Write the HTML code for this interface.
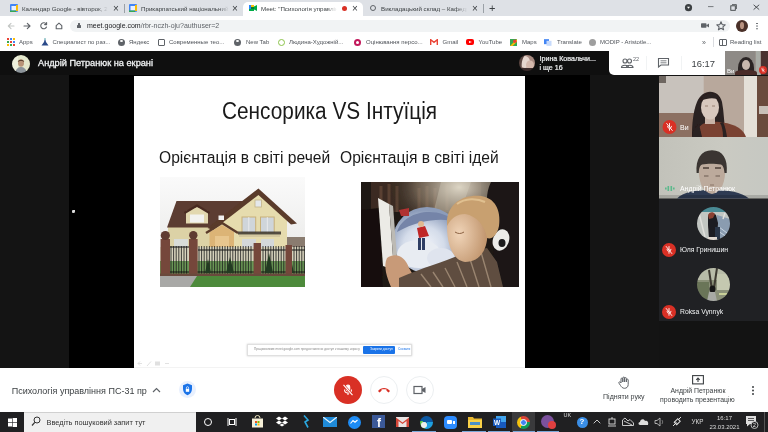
<!DOCTYPE html>
<html><head><meta charset="utf-8">
<style>
*{margin:0;padding:0;box-sizing:border-box}
html,body{width:768px;height:432px;overflow:hidden;background:#fff;font-family:"Liberation Sans",sans-serif}
body{will-change:transform}
.a{position:absolute}
.t{position:absolute;white-space:nowrap;line-height:1}
</style></head><body>
<!-- TAB STRIP -->
<div class="a" style="left:0;top:0;width:768px;height:16px;background:#dee1e6"></div>
<div class="a" style="left:243px;top:2px;width:120px;height:14px;background:#fff;border-radius:5px 5px 0 0"></div>
<div class="a" style="left:124px;top:4px;width:1px;height:9px;background:#9aa0a6"></div>
<div class="a" style="left:483px;top:4px;width:1px;height:9px;background:#9aa0a6"></div>
<!-- tab1 calendar favicon -->
<svg class="a" style="left:10px;top:4px" width="8" height="8" viewBox="0 0 8 8"><rect width="8" height="8" rx="1" fill="#4285f4"/><rect x="1.5" y="2" width="4.5" height="4.5" fill="#e8f0fe"/><rect x="6" y="1" width="2" height="6" fill="#fbbc04"/><rect x="0" y="6.5" width="6" height="1.5" fill="#34a853"/></svg>
<div class="t" style="left:22px;top:6px;font-size:6.2px;color:#3c4043;width:86px;overflow:hidden">Календар Google - вівторок, 23.03</div>
<div class="t" style="left:113px;top:4px;font-size:10px;color:#3c4043">×</div>
<!-- tab2 -->
<svg class="a" style="left:129px;top:4px" width="8" height="8" viewBox="0 0 8 8"><rect width="8" height="8" rx="1" fill="#4285f4"/><rect x="1.5" y="2" width="4.5" height="4.5" fill="#e8f0fe"/><rect x="6" y="1" width="2" height="6" fill="#fbbc04"/><rect x="0" y="6.5" width="6" height="1.5" fill="#34a853"/></svg>
<div class="t" style="left:141px;top:6px;font-size:6.2px;color:#3c4043;width:88px;overflow:hidden">Прикарпатський національний</div>
<div class="t" style="left:232px;top:4px;font-size:10px;color:#3c4043">×</div>
<!-- tab3 active -->
<svg class="a" style="left:249px;top:5px" width="8" height="6" viewBox="0 0 8 6"><rect x="0" y="0" width="5" height="6" fill="#00832d"/><rect x="0" y="0" width="5" height="2" fill="#fbbc04"/><rect x="0" y="0" width="2" height="6" fill="#2684fc"/><rect x="0" y="4" width="5" height="2" fill="#00ac47"/><path d="M5 1.5 L8 0 L8 6 L5 4.5Z" fill="#00ac47"/></svg>
<div class="t" style="left:261px;top:6px;font-size:6.2px;color:#3c4043;width:76px;overflow:hidden">Meet: "Психологія управлін</div>
<div class="a" style="left:341.5px;top:5.8px;width:5px;height:5px;background:#d93025;border-radius:50%"></div>
<div class="t" style="left:352px;top:4px;font-size:10px;color:#3c4043">×</div>
<!-- tab4 -->
<div class="a" style="left:370px;top:5px;width:6px;height:6px;border:1px solid #5f6368;border-radius:50%"></div>
<div class="t" style="left:381px;top:6px;font-size:6.2px;color:#3c4043;width:86px;overflow:hidden">Викладацький склад – Кафедра</div>
<div class="t" style="left:472px;top:4px;font-size:10px;color:#3c4043">×</div>
<div class="t" style="left:489px;top:2.5px;font-size:11px;color:#3c4043">+</div>
<div class="a" style="left:97px;top:4px;width:11px;height:9px;background:linear-gradient(90deg,rgba(222,225,230,0),#dee1e6)"></div>
<div class="a" style="left:218px;top:4px;width:11px;height:9px;background:linear-gradient(90deg,rgba(222,225,230,0),#dee1e6)"></div>
<div class="a" style="left:326px;top:4px;width:11px;height:9px;background:linear-gradient(90deg,rgba(255,255,255,0),#fff)"></div>
<div class="a" style="left:456px;top:4px;width:11px;height:9px;background:linear-gradient(90deg,rgba(222,225,230,0),#dee1e6)"></div>
<!-- window controls -->
<svg class="a" style="left:684px;top:3px" width="80" height="10" viewBox="0 0 80 10">
<circle cx="4.5" cy="4.7" r="3.6" fill="#3c4043"/><path d="M3 3.8 L6 3.8 L4.5 5.8Z" fill="#fff"/>
<path d="M24 3.6 H29.5" stroke="#6a6e72" stroke-width="0.9"/>
<rect x="46.8" y="2.8" width="4.5" height="4.5" fill="none" stroke="#3c4043" stroke-width="0.9"/>
<path d="M48 1.6 H52.4 V6" fill="none" stroke="#3c4043" stroke-width="0.8"/>
<path d="M69.6 1.8 L75.2 6.6 M75.2 1.8 L69.6 6.6" stroke="#3c4043" stroke-width="0.9"/>
</svg>
<!-- TOOLBAR -->
<div class="a" style="left:0;top:16px;width:768px;height:17px;background:#fff"></div>
<div class="a" style="left:70px;top:19.8px;width:660px;height:12.7px;background:#f1f3f4;border-radius:7px"></div>
<svg class="a" style="left:0;top:17px" width="70" height="17" viewBox="0 0 70 17">
<g fill="none" stroke-width="1.1" stroke-linecap="round" stroke-linejoin="round">
<path d="M8.3 9 H14 M8.3 9 L11 6.3 M8.3 9 L11 11.7" stroke="#c4c7c5"/>
<path d="M24 9 H30 M30 9 L27.3 6.3 M30 9 L27.3 11.7" stroke="#5f6368"/>
<path d="M46.3 7.2 A3 3 0 1 0 46.5 10" stroke="#5f6368"/>
<path d="M46.6 5.6 V7.6 H44.6" stroke="#5f6368"/>
<path d="M56.2 8.6 L59 6.1 L61.8 8.6 V11.7 H56.2Z" stroke="#5f6368"/>
</g></svg>
<div class="a" style="left:76.8px;top:25px;width:4px;height:3.3px;background:#5f6368;border-radius:0.5px"></div>
<div class="a" style="left:77.55px;top:23px;width:2.5px;height:3px;border:0.8px solid #5f6368;border-bottom:none;border-radius:1.5px 1.5px 0 0"></div>
<div class="t" style="left:87px;top:22px;font-size:7px;color:#202124">meet.google.com<span style="color:#5f6368">/rbr-nczh-oju?authuser=2</span></div>
<!-- right toolbar icons -->
<svg class="a" style="left:701px;top:23px" width="8" height="5" viewBox="0 0 8 5"><rect x="0" y="0.3" width="5.5" height="4.4" rx="0.8" fill="#5f6368"/><path d="M5 2.5 L8 0.5 V4.5Z" fill="#5f6368"/></svg>
<svg class="a" style="left:716px;top:21px" width="10" height="10" viewBox="0 0 10 10"><path d="M5 0.8 L6.2 3.6 L9.2 3.8 L6.9 5.8 L7.6 8.8 L5 7.2 L2.4 8.8 L3.1 5.8 L0.8 3.8 L3.8 3.6Z" fill="none" stroke="#5f6368" stroke-width="1.1" stroke-linejoin="round"/></svg>
<div class="a" style="left:735.5px;top:19.5px;width:12px;height:12px;background:#4a3028;border-radius:50%;overflow:hidden"><div class="a" style="left:4px;top:2px;width:4.5px;height:7px;background:#b89280;border-radius:50%"></div></div>
<div class="a" style="left:756.2px;top:22.5px;width:1.6px;height:1.6px;background:#5f6368;border-radius:50%;box-shadow:0 2.6px 0 #5f6368,0 5.2px 0 #5f6368"></div>
<!-- BOOKMARKS -->
<div class="a" style="left:0;top:33px;width:768px;height:18px;background:#fff"></div>
<svg class="a" style="left:7px;top:38px" width="8" height="8" viewBox="0 0 8 8">
<rect x="0" y="0" width="2" height="2" fill="#ea4335"/><rect x="3" y="0" width="2" height="2" fill="#4285f4"/><rect x="6" y="0" width="2" height="2" fill="#fbbc04"/>
<rect x="0" y="3" width="2" height="2" fill="#34a853"/><rect x="3" y="3" width="2" height="2" fill="#ea4335"/><rect x="6" y="3" width="2" height="2" fill="#4285f4"/>
<rect x="0" y="6" width="2" height="2" fill="#fbbc04"/><rect x="3" y="6" width="2" height="2" fill="#34a853"/><rect x="6" y="6" width="2" height="2" fill="#ea4335"/>
</svg>
<div class="t" style="left:19px;top:39px;font-size:6px;color:#50545a">Apps</div>
<svg class="a" style="left:41px;top:38px" width="8" height="8" viewBox="0 0 8 8"><path d="M4 0 L5 4 L7.5 7.5 H0.5 L3 4Z" fill="#2a4a8a"/><circle cx="4" cy="1" r="1" fill="#9cc"/></svg>
<div class="t" style="left:52.5px;top:39px;font-size:6px;color:#50545a">Специалист по раз...</div>
<div class="a" style="left:118px;top:38.5px;width:7px;height:7px;background:#5f6368;border-radius:50%"></div>
<div class="a" style="left:120px;top:40px;width:3px;height:2px;background:#fff;border-radius:50%"></div>
<div class="t" style="left:129px;top:39px;font-size:6px;color:#50545a">Яндекс</div>
<div class="a" style="left:157.5px;top:38.5px;width:7px;height:7px;border:1.2px solid #5f6368;border-radius:1px"></div>
<div class="t" style="left:169px;top:39px;font-size:6px;color:#50545a">Современные тео...</div>
<div class="a" style="left:233.5px;top:38.5px;width:7px;height:7px;background:#5f6368;border-radius:50%"></div>
<div class="a" style="left:235.5px;top:40px;width:3px;height:2px;background:#fff;border-radius:50%"></div>
<div class="t" style="left:246px;top:39px;font-size:6px;color:#50545a">New Tab</div>
<div class="a" style="left:277.5px;top:38.5px;width:7px;height:7px;border:1.2px solid #8bc34a;border-radius:50%"></div>
<div class="t" style="left:289px;top:39px;font-size:6px;color:#50545a">Людина-Художній...</div>
<div class="a" style="left:354px;top:38.5px;width:7px;height:7px;background:#c2185b;border-radius:50%"></div>
<div class="a" style="left:356px;top:40.5px;width:3px;height:3px;background:#fff;border-radius:50%"></div>
<div class="t" style="left:366px;top:39px;font-size:6px;color:#50545a">Оцінювання персо...</div>
<svg class="a" style="left:430px;top:39px" width="8" height="6" viewBox="0 0 8 6"><path d="M0.7 6 V0.7 L4 3.3 L7.3 0.7 V6" fill="none" stroke="#ea4335" stroke-width="1.4"/></svg>
<div class="t" style="left:442.5px;top:39px;font-size:6px;color:#50545a">Gmail</div>
<div class="a" style="left:466px;top:39px;width:8px;height:6px;background:#f00;border-radius:2px"></div>
<div class="a" style="left:469px;top:40.5px;width:0;height:0;border-left:3px solid #fff;border-top:1.5px solid transparent;border-bottom:1.5px solid transparent"></div>
<div class="t" style="left:478.5px;top:39px;font-size:6px;color:#50545a">YouTube</div>
<svg class="a" style="left:510px;top:38.5px" width="7" height="7" viewBox="0 0 8 8"><rect width="8" height="8" fill="#34a853"/><path d="M0 8 L8 0 V3 L3 8Z" fill="#fbbc04"/><circle cx="5.5" cy="2.5" r="2" fill="#ea4335"/></svg>
<div class="t" style="left:522px;top:39px;font-size:6px;color:#50545a">Maps</div>
<svg class="a" style="left:544px;top:38.5px" width="7.5" height="7" viewBox="0 0 9 8"><rect width="6" height="6" fill="#4285f4"/><rect x="3" y="2" width="6" height="6" fill="#c6dafc"/></svg>
<div class="t" style="left:557px;top:39px;font-size:6px;color:#50545a">Translate</div>
<div class="a" style="left:588.5px;top:38.5px;width:7px;height:7px;background:#9e9e9e;border-radius:50%"></div>
<div class="t" style="left:600px;top:39px;font-size:6px;color:#50545a">MODIP - Aristotle...</div>
<div class="t" style="left:702px;top:38.5px;font-size:7px;color:#5f6368">»</div>
<div class="a" style="left:713px;top:37px;width:1px;height:10px;background:#dadce0"></div>
<div class="a" style="left:718.5px;top:38.5px;width:8px;height:7px;border:1px solid #5f6368;border-radius:1px"></div>
<div class="a" style="left:722px;top:39px;width:1px;height:6px;background:#5f6368"></div>
<div class="t" style="left:730px;top:39px;font-size:6px;color:#50545a">Reading list</div>
<!-- MEET AREA -->
<div class="a" style="left:0;top:51px;width:768px;height:317px;background:#141414"></div>
<div class="a" style="left:0;top:51px;width:609px;height:24px;background:#0f0f0f"></div>
<div class="a" style="left:69px;top:75px;width:521px;height:293px;background:#000"></div>
<!-- presenter avatar -->
<svg class="a" style="left:12px;top:54.5px" width="18" height="18" viewBox="0 0 18 18">
<defs><clipPath id="pa"><circle cx="9" cy="9" r="9"/></clipPath></defs>
<g clip-path="url(#pa)" filter="url(#ab)">
<rect width="18" height="18" fill="#e4e8cc"/>
<rect x="0" y="0" width="6" height="18" fill="#eef0dc"/>
<path d="M3 18 C4 13 7 12 9 12 C11 12 14 13 15 18Z" fill="#8c949a"/>
<ellipse cx="9" cy="8" rx="3" ry="3.8" fill="#b89478"/>
<path d="M5.8 7 C6 4 12 4 12.2 7 C11 5.5 7 5.5 5.8 7Z" fill="#5a4030"/>
</g></svg>
<div class="t" style="left:38px;top:59.3px;font-size:9.2px;color:#f1f3f4;-webkit-text-stroke:0.3px #f1f3f4">Андрій Петранюк на екрані</div>
<!-- Iryna -->
<svg class="a" style="left:519px;top:55px" width="16" height="16" viewBox="0 0 16 16">
<defs><clipPath id="ir"><circle cx="8" cy="8" r="8"/></clipPath></defs>
<g clip-path="url(#ir)" filter="url(#ab)">
<rect width="16" height="16" fill="#a88a80"/>
<ellipse cx="6" cy="7" rx="5" ry="6" fill="#e6d6ce"/>
<ellipse cx="11" cy="10" rx="4" ry="4.5" fill="#d4b8ac"/>
<path d="M0 0 H6 C3 4 2 8 3 16 H0Z" fill="#5a4440"/>
<rect x="0" y="13" width="16" height="3" fill="#3a2c2a"/>
</g></svg>
<div class="t" style="left:539.5px;top:56.1px;font-size:7.1px;color:#f1f3f4;-webkit-text-stroke:0.2px #f1f3f4">Ірина Ковальчи...</div>
<div class="t" style="left:539.5px;top:65.1px;font-size:7.1px;color:#f1f3f4;-webkit-text-stroke:0.2px #f1f3f4">і ще 16</div>
<!-- white panel -->
<div class="a" style="left:609px;top:51px;width:116px;height:24px;background:#fff;border-radius:0 0 0 5px"></div>
<div class="a" style="left:646px;top:56px;width:1px;height:14px;background:#f1f3f4"></div>
<div class="a" style="left:681px;top:56px;width:1px;height:14px;background:#f1f3f4"></div>
<svg class="a" style="left:620px;top:57px" width="22" height="12" viewBox="0 0 22 12">
<g fill="none" stroke="#5f6368" stroke-width="1.1">
<circle cx="5" cy="4" r="2"/><circle cx="9.5" cy="4" r="2"/>
<path d="M1.5 10.5 C1.5 7.5 8.5 7.5 8.5 10.5Z"/><path d="M6.5 10.5 C6.5 7.5 13 7.5 13 10.5Z"/>
</g></svg>
<div class="t" style="left:633px;top:57px;font-size:5.5px;color:#5f6368">22</div>
<svg class="a" style="left:657px;top:57px" width="13" height="11" viewBox="0 0 13 11">
<path d="M1.5 1.5 H11.5 V8 H4 L1.5 10Z" fill="none" stroke="#5f6368" stroke-width="1.1"/>
<path d="M3.5 3.8 H9.5 M3.5 5.8 H9.5" stroke="#5f6368" stroke-width="0.8"/></svg>
<div class="t" style="left:691.5px;top:58.5px;font-size:9.4px;color:#3c4043">16:17</div>
<!-- self view small tile -->
<div class="a" style="left:725px;top:51px;width:43px;height:24px;overflow:hidden;background:#9a948e">
  <div class="a" style="left:0;top:0;width:30px;height:24px;background:#8e8a86"></div>
  <div class="a" style="left:31px;top:0;width:4px;height:24px;background:#a8aca6"></div>
  <div class="a" style="left:36px;top:0;width:7px;height:24px;background:#4a3230"></div>
  <div class="a" style="left:12.5px;top:6px;width:16px;height:22px;border-radius:50% 50% 20% 20%;background:#2a2424"></div>
  <div class="a" style="left:16.5px;top:9px;width:8px;height:10px;border-radius:50%;background:#c8b8ae"></div><div class="a" style="left:10px;top:19px;width:22px;height:6px;border-radius:40% 40% 0 0;background:#4a2c28"></div>
  <div class="t" style="left:2px;top:16.5px;font-size:6px;color:#fff">Ви</div>
  <div class="a" style="left:33.5px;top:15px;width:8px;height:8px;border-radius:50%;background:#d93025"></div><svg class="a" style="left:33.5px;top:15px" width="8" height="8" viewBox="0 0 14 14"><g fill="none" stroke="#fff" stroke-width="0.9" stroke-linecap="round"><path d="M7 3.5 V6.8"/><path d="M5 6.3 A2 2 0 0 0 9 6.3 M7 8.8 V10.3"/><path d="M4.2 3.5 L9.8 10.5"/></g></svg>
</div>
<!-- tile 1: woman (self) -->
<svg class="a" style="left:659px;top:75.5px" width="109" height="61" viewBox="0 0 109 61">
<defs><filter id="wb" x="-5%" y="-5%" width="110%" height="110%"><feGaussianBlur stdDeviation="0.6"/></filter></defs>
<rect width="109" height="61" fill="#bdb2aa"/>
<g filter="url(#wb)">
<rect x="0" y="0" width="45" height="61" fill="#c8c2bc"/>
<rect x="44.7" y="0" width="41" height="61" fill="#b8a89c"/>
<rect x="85" y="0" width="13" height="61" fill="#e4e0d8"/>
<rect x="98" y="0" width="11" height="61" fill="#6a4c3e"/>
<rect x="100" y="30" width="9" height="8" fill="#c8c0b8"/>
<rect x="0" y="0" width="7" height="7" fill="#6e6660"/>
<rect x="0" y="37" width="40" height="24" fill="#8c7062"/>
<path d="M33 61 C33 48 34 36 38 26 C41 19 46 15.7 51 15.7 C57 15.7 61 19 63 26 C65 36 65 48 67 61Z" fill="#2a2020"/>
<path d="M36 61 C38 52 42 47 50 46 C60 45 72 47 80 52 C84 55 86 58 87 61Z" fill="#7a4232"/>
<path d="M33 61 C34 54 36 50 40 48 L43 61Z M61 47 C63 50 64 55 64 61 L68 61 C67 54 66 50 64 46Z" fill="#2a2020"/>
<rect x="46" y="40" width="10" height="8" fill="#c8b4a8"/>
<ellipse cx="51" cy="31.5" rx="9" ry="12" fill="#d8c8be"/>
<path d="M41 25 C43 19 48 17 52 17 C57 17 60 20 61 24 C57 22 50 21 41 25Z" fill="#2a2020"/>
<path d="M46 30 H49 M53 30 H56" stroke="#8a7060" stroke-width="0.8"/>
</g>
<circle cx="10.5" cy="51" r="7" fill="#d93025"/>
<svg x="3.5" y="44" width="14" height="14" viewBox="0 0 14 14"><g fill="none" stroke="#fff" stroke-width="0.9" stroke-linecap="round"><path d="M7 3.5 V6.8"/><path d="M5 6.3 A2 2 0 0 0 9 6.3 M7 8.8 V10.3"/><path d="M4.2 3.5 L9.8 10.5"/></g></svg>
<text x="21" y="53.5" font-size="7" fill="#fff" font-family="Liberation Sans">Ви</text>
</svg>
<!-- tile 2: man -->
<svg class="a" style="left:659px;top:137px" width="109" height="61.5" viewBox="0 0 109 61.5">
<defs><filter id="mb" x="-5%" y="-5%" width="110%" height="110%"><feGaussianBlur stdDeviation="0.6"/></filter>
<linearGradient id="mw" x1="0" y1="0" x2="1" y2="0"><stop offset="0" stop-color="#c2c2ba"/><stop offset="0.6" stop-color="#cacac2"/><stop offset="1" stop-color="#c6c8c2"/></linearGradient></defs>
<rect width="109" height="61.5" fill="url(#mw)"/>
<g filter="url(#mb)">
<path d="M18 61.5 C24 55 36 53 53 53 C70 53 82 55 90 61.5Z" fill="#2e3a52"/>
<path d="M39.7 30 C39.5 45 43 55 53 57 C63 55 66.5 45 66.3 30 C66 26 60 24 53 24 C46 24 40 26 39.7 30Z" fill="#bcaa9c"/>
<path d="M37.6 36 C36.5 22 42 13.2 53 13.2 C64 13.2 69 22 67.7 36 L65.5 36 C65 31 64 28.5 62 27.6 C56 26.5 48 26.5 43 27.6 C41 28.5 40 31 39.8 36Z" fill="#3a3632"/>
<path d="M44 31 H50 M56 31 H62" stroke="#4a3e36" stroke-width="1.4"/>
<path d="M45 39 H49.5 M56.5 39 H61" stroke="#6a5a50" stroke-width="1"/>
<path d="M51 48 H55" stroke="#8a7466" stroke-width="1"/>
</g>
<rect y="58" width="109" height="3.5" fill="#000" opacity="0.15"/>
<text x="21" y="54" font-size="6.9" fill="#fff" font-family="Liberation Sans">Андрій Петранюк</text>
</svg>
<svg class="a" style="left:665px;top:185px" width="10" height="7" viewBox="0 0 10 7"><g fill="#5bb98c"><rect x="0" y="2.5" width="1.6" height="2"/><rect x="2.5" y="1" width="1.6" height="5"/><rect x="5.5" y="1" width="1.6" height="5"/><rect x="8" y="2.5" width="1.6" height="2"/></g></svg>
<!-- tile 3, 4 -->
<div class="a" style="left:659px;top:199px;width:109px;height:122px;background:#202124"></div>
<svg class="a" style="left:697px;top:207px" width="33" height="33" viewBox="0 0 33 33">
<defs><clipPath id="c3"><circle cx="16.5" cy="16.5" r="16.5"/></clipPath><filter id="ab" x="-5%" y="-5%" width="110%" height="110%"><feGaussianBlur stdDeviation="0.6"/></filter></defs>
<g clip-path="url(#c3)"><g filter="url(#ab)">
<rect width="33" height="33" fill="#c2c6c2"/>
<rect x="0" y="0" width="33" height="5" fill="#4a8a94"/>
<path d="M20 8 L33 12 V33 H18Z" fill="#8a9cb0"/>
<path d="M22 20 L30 26 M21 24 L30 30" stroke="#c8d4e0" stroke-width="1"/>
<path d="M2 6 L8 30 M28 6 L26 12" stroke="#e0e0dc" stroke-width="1.5"/>
<path d="M11 10 C11 6 16 5 19 8 L21 16 L20 32 H12 L11 18Z" fill="#1e1c20"/>
<path d="M11 8 C12 5 16 4 18 7 L16 11 L12 12Z" fill="#8a4030"/>
<rect x="18" y="20" width="5" height="12" fill="#2a3446"/>
<rect x="11" y="30" width="9" height="3" fill="#e0d8d0"/>
</g></g></svg>
<div class="a" style="left:662px;top:242.5px;width:14px;height:14px;border-radius:50%;background:#d93025"></div>
<svg class="a" style="left:662px;top:242.5px" width="14" height="14" viewBox="0 0 14 14"><g fill="none" stroke="#fff" stroke-width="0.9" stroke-linecap="round"><path d="M7 3.5 V6.8"/><path d="M5 6.3 A2 2 0 0 0 9 6.3 M7 8.8 V10.3"/><path d="M4.2 3.5 L9.8 10.5"/></g></svg>
<div class="t" style="left:680px;top:246.5px;font-size:6.9px;color:#f1f3f4">Юля Гринишин</div>
<svg class="a" style="left:697px;top:268px" width="33" height="33" viewBox="0 0 33 33">
<defs><clipPath id="c4"><circle cx="16.5" cy="16.5" r="16.5"/></clipPath></defs>
<g clip-path="url(#c4)"><g filter="url(#ab)">
<rect width="33" height="33" fill="#8a9078"/>
<rect x="0" y="0" width="33" height="12" fill="#b8bca8"/>
<rect x="20" y="6" width="13" height="16" fill="#c4c8b0"/>
<rect x="0" y="14" width="12" height="19" fill="#6a7458"/>
<path d="M12 2 L15 22 M20 0 L17 20" stroke="#3e3a30" stroke-width="2"/>
<ellipse cx="15.5" cy="21" rx="3" ry="3.5" fill="#141414"/>
<path d="M12 24 L18 24 L20 33 H10Z" fill="#a8aaa4"/>
<path d="M22 26 H30" stroke="#c8d098" stroke-width="2"/>
</g></g></svg>
<div class="a" style="left:662px;top:304.5px;width:14px;height:14px;border-radius:50%;background:#d93025"></div>
<svg class="a" style="left:662px;top:304.5px" width="14" height="14" viewBox="0 0 14 14"><g fill="none" stroke="#fff" stroke-width="0.9" stroke-linecap="round"><path d="M7 3.5 V6.8"/><path d="M5 6.3 A2 2 0 0 0 9 6.3 M7 8.8 V10.3"/><path d="M4.2 3.5 L9.8 10.5"/></g></svg>
<div class="t" style="left:680px;top:308.5px;font-size:6.8px;color:#f1f3f4">Roksa Vynnyk</div>
<div class="a" style="left:659px;top:321px;width:109px;height:47px;background:#131313"></div>
<!-- SLIDE -->
<div class="a" style="left:134px;top:75.6px;width:391px;height:292.4px;background:#fff"></div>
<div class="t" style="left:222px;top:100px;font-size:23.5px;color:#1a1a1a;transform:scaleX(0.886);transform-origin:0 0">Сенсорика VS Інтуїція</div>
<div class="t" style="left:158.5px;top:150.3px;font-size:16px;color:#1a1a1a;transform:scaleX(0.975);transform-origin:0 0">Орієнтація в світі речей</div>
<div class="t" style="left:339.5px;top:150.3px;font-size:16px;color:#1a1a1a;transform:scaleX(0.975);transform-origin:0 0">Орієнтація в світі ідей</div>
<!-- house image -->
<svg class="a" style="left:160px;top:177px" width="145" height="110" viewBox="0 0 145 110">
<defs><linearGradient id="sky" x1="0" y1="0" x2="0" y2="1"><stop offset="0" stop-color="#fafafa"/><stop offset="1" stop-color="#e4e4e2"/></linearGradient>
<filter id="hb" x="-5%" y="-5%" width="110%" height="110%"><feGaussianBlur stdDeviation="0.45"/></filter></defs>
<rect width="145" height="110" fill="url(#sky)"/>
<g filter="url(#hb)">
<rect x="126" y="60" width="19" height="14" fill="#8a7c70"/>
<rect x="8" y="50" width="46" height="24" fill="#dcd2a6"/>
<path d="M7 50.5 L16.5 24 L84 24 L50 50.5Z" fill="#5c3c30"/>
<path d="M98.4 17 L127 42 L127 74 L52 74 L52 51Z" fill="#e6dcae"/>
<path d="M98.4 11.5 L137 46.5 L131 47.5 L98.4 18 L53 53 L47.5 51Z" fill="#5a3a2c"/>
<path d="M26 46.5 V34 L37 30 L48 34 V46.5Z" fill="#e2d8b0"/>
<path d="M24.5 36 L37 28.5 L49.5 36" fill="none" stroke="#4a2c22" stroke-width="2.2"/>
<rect x="30" y="37.5" width="14" height="8" fill="#f2f2f0"/>
<rect x="58.5" y="38.5" width="5.5" height="4.5" fill="#f0f0f0"/>
<rect x="95" y="23" width="6.5" height="7" fill="#e4e8ea" stroke="#c4b48a" stroke-width="0.8"/>
<rect x="82" y="40" width="13.7" height="15.7" fill="#cfd5da" stroke="#c8b078" stroke-width="1"/>
<rect x="100.5" y="40" width="13.7" height="15.7" fill="#cfd5da" stroke="#c8b078" stroke-width="1"/>
<path d="M88.8 40 V55.7 M107.3 40 V55.7" stroke="#f0f0f0" stroke-width="0.8"/>
<rect x="78" y="54.5" width="43" height="3" fill="#3a3530" opacity="0.85"/>
<rect x="79" y="58" width="41" height="2" fill="#d4c8a0"/>
<path d="M49.5 74 V55 L62 48 L74 55 V74Z" fill="#dcb476"/>
<path d="M46 56 L62 46 L78 56" fill="none" stroke="#5a3a2c" stroke-width="2.4"/>
<rect x="55" y="59" width="14" height="15" fill="#e8c68e"/>
<rect x="14" y="62" width="14" height="12" fill="#d8dcd8"/>
<rect x="82" y="62" width="14" height="10" fill="#d4d8da"/>
<rect x="101" y="62" width="13" height="10" fill="#d4d8da"/>
<rect x="0" y="70" width="145" height="27" fill="#d6d2bc"/>
<rect x="0" y="84" width="145" height="13" fill="#6a9656"/>
<path d="M11 69 V97 M13.6 69 V97 M16.2 69 V97 M18.8 69 V97 M21.4 69 V97 M24.0 69 V97 M26.6 69 V97 M39 69 V97 M41.6 69 V97 M44.2 69 V97 M46.8 69 V97 M49.4 69 V97 M52.0 69 V97 M54.6 69 V97 M57.2 69 V97 M59.8 69 V97 M62.4 69 V97 M65.0 69 V97 M67.6 69 V97 M70.2 69 V97 M72.8 69 V97 M75.4 69 V97 M78.0 69 V97 M80.6 69 V97 M83.2 69 V97 M85.8 69 V97 M88.4 69 V97 M91.0 69 V97 M103 69 V97 M105.6 69 V97 M108.2 69 V97 M110.8 69 V97 M113.4 69 V97 M116.0 69 V97 M118.6 69 V97 M121.2 69 V97 M123.8 69 V97 M134 69 V97 M136.6 69 V97 M139.2 69 V97 M141.8 69 V97 M144.4 69 V97" stroke="#181818" stroke-width="0.8"/>
<path d="M10 70 H29 M38 73 H94 M101 73 H126 M132 73 H145 M10 95 H145" stroke="#151515" stroke-width="1.2"/>
<path d="M105 96 L109 76 L113 96Z M126 96 L130 78 L134 96Z M66 96 L70 80 L74 96Z M45 96 L48 82 L51 96Z" fill="#243a20"/>
<rect x="0.6" y="62" width="9.4" height="36" fill="#74463a"/>
<circle cx="5.3" cy="58.5" r="4.6" fill="#5e3a30"/>
<rect x="29" y="62" width="8.6" height="36" fill="#74463a"/>
<circle cx="33.3" cy="58.3" r="4.2" fill="#5e3a30"/>
<rect x="93.6" y="66" width="7.4" height="32" fill="#74463a"/>
<rect x="125.5" y="68" width="6.5" height="30" fill="#74463a"/>
<rect x="0" y="96.5" width="145" height="2.5" fill="#6a4a3c"/>
<rect x="0" y="99" width="145" height="11" fill="#4e8a3a"/>
<path d="M0 99 H37 L30 110 H0Z" fill="#a8a8a6"/>
</g>
</svg>
<!-- child image -->
<svg class="a" style="left:361px;top:182px" width="158" height="105" viewBox="0 0 158 105">
<defs>
<radialGradient id="glow" cx="0.62" cy="0.05" r="0.45"><stop offset="0" stop-color="#e0d8c8"/><stop offset="0.6" stop-color="#8a7c6a" stop-opacity="0.6"/><stop offset="1" stop-color="#2a2420" stop-opacity="0"/></radialGradient>
<radialGradient id="bub" cx="0.45" cy="0.6" r="0.55"><stop offset="0" stop-color="#f4f6fa"/><stop offset="0.55" stop-color="#d4dcea"/><stop offset="1" stop-color="#8c9cba"/></radialGradient>
<radialGradient id="face" cx="0.3" cy="0.5" r="0.7"><stop offset="0" stop-color="#f0d4b8"/><stop offset="1" stop-color="#c0946c"/></radialGradient>
<filter id="bl" x="-10%" y="-10%" width="120%" height="120%"><feGaussianBlur stdDeviation="0.6"/></filter>
</defs>
<rect width="158" height="105" fill="#1e1814"/>
<g filter="url(#bl)">
<rect x="10" y="0" width="110" height="30" fill="#3a2c22"/>
<path d="M20 4 V28 M28 2 V28 M36 4 V30 M58 6 V28 M66 4 V28 M74 6 V30 M86 2 V28" stroke="#5a4030" stroke-width="3"/>
<rect width="158" height="105" fill="url(#glow)"/>
<path d="M80 0 L110 0 L96 40 L70 40Z" fill="#d8d0c0" opacity="0.35"/>
<ellipse cx="66" cy="58" rx="34" ry="33" fill="url(#bub)"/>
<path d="M36 50 C42 30 74 22 96 40 C84 36 60 36 36 50Z" fill="#7484a8"/>
<ellipse cx="58" cy="72" rx="22" ry="14" fill="#e8ecf2"/>
<ellipse cx="80" cy="76" rx="14" ry="10" fill="#dfe4ee"/>
<path d="M56 46 L64 44 L68 54 L58 56Z" fill="#c02828"/>
<circle cx="60" cy="42" r="3" fill="#e0b890"/>
<path d="M57 56 L60 56 L60 68 L57 68Z M61 56 L64 56 L64 68 L61 68Z" fill="#2e3e64"/>
<path d="M38 28 L48 26 L48 34 L40 34Z" fill="#b03030"/>
<path d="M0 28 L18 26 L22 105 H0Z" fill="#16100c"/>
<path d="M17 16 L28 22 L33 88 L22 84Z" fill="#ecebe6"/>
<path d="M28 22 L32 24 L37 88 L33 88Z" fill="#bcbab4"/>
<path d="M26 76 C34 70 44 74 48 86 L56 100 L46 105 L30 105 C26 96 22 84 26 76Z" fill="#c89a78"/>
<path d="M130 0 H158 V105 H124 C130 90 136 70 130 50 C128 30 122 16 130 0Z" fill="#1a1616"/>
<ellipse cx="140" cy="58" rx="8" ry="11" fill="#ecece8" transform="rotate(20 140 58)"/>
<ellipse cx="141" cy="61" rx="3.5" ry="4" fill="#1a1a1a"/>
<path d="M38 96 C60 86 84 80 100 72 L126 66 L136 80 L142 105 H38Z" fill="#5e4e40"/>
<path d="M60 92 L70 105 M72 90 L82 105 M84 86 L94 105 M96 80 L106 105 M108 74 L118 105 M120 70 L130 105" stroke="#9a8470" stroke-width="1.4"/>
<path d="M86 44 C86 28 96 22 108 24 C120 26 128 40 126 58 C124 72 116 80 104 80 C92 78 86 64 86 44Z" fill="url(#face)"/>
<path d="M86 38 C88 20 104 12 120 14 C134 16 140 28 138 44 C136 54 130 58 126 56 C124 44 116 34 104 32 C96 32 90 36 86 44Z" fill="#c8a070"/>
<path d="M96 22 C104 16 116 16 124 20" stroke="#e0c090" stroke-width="2" fill="none"/>
<path d="M94 50 C97 52 100 52 103 50" stroke="#8a6040" stroke-width="1" fill="none"/>
</g>
</svg>
<!-- share notice -->
<div class="a" style="left:247px;top:344px;width:165px;height:11.5px;background:#fff;border:1px solid #e0e0e0;box-shadow:0 0 2px rgba(0,0,0,0.2)"></div>
<div class="t" style="left:254px;top:348px;font-size:3.2px;color:#888">Працюватиме meet.google.com предоставлено доступ к вашему экрану</div>
<div class="a" style="left:363px;top:345.8px;width:32px;height:8px;background:#1a73e8;border-radius:1px"></div>
<div class="t" style="left:370px;top:348.2px;font-size:3.2px;color:#fff">Закрити доступ</div>
<div class="t" style="left:398px;top:348.2px;font-size:3.2px;color:#1a73e8">Сховати</div>
<svg class="a" style="left:136px;top:360px" width="36" height="7" viewBox="0 0 36 7"><g fill="none" stroke="#e2e2e2" stroke-width="1"><path d="M2 3.5 H6 M2 3.5 L4 1.5 M2 3.5 L4 5.5"/><path d="M11 6 L15 1.5"/></g><rect x="19" y="1.5" width="5" height="4" fill="#e0e0e0"/><path d="M29 3.5 H33" stroke="#e2e2e2"/></svg>
<div class="a" style="left:134px;top:366.5px;width:391px;height:1.5px;background:#f3f3f3"></div>
<div class="a" style="left:72px;top:209.5px;width:2.5px;height:3.5px;background:#ddd;border-radius:1px 0 1.5px 1px"></div>
<!-- BOTTOM BAR -->
<div class="a" style="left:0;top:368px;width:768px;height:44px;background:#fff"></div>
<div class="t" style="left:11.7px;top:386.5px;font-size:9px;color:#3c4043">Психологія управління ПС-31 пр</div>
<svg class="a" style="left:152px;top:387px" width="9" height="6" viewBox="0 0 9 6"><path d="M1 5 L4.5 1.5 L8 5" fill="none" stroke="#5f6368" stroke-width="1.2"/></svg>
<div class="a" style="left:179px;top:381px;width:17px;height:17px;border-radius:50%;background:#e8f0fe"></div>
<svg class="a" style="left:182px;top:383px" width="11" height="13" viewBox="0 0 11 13"><path d="M5.5 0.5 L10 2.3 V6 C10 9 8 11.3 5.5 12.3 C3 11.3 1 9 1 6 V2.3Z" fill="#1a73e8"/><rect x="3.8" y="5.8" width="3.4" height="3" fill="#fff"/><path d="M4.4 5.8 V4.8 A1.1 1.1 0 0 1 6.6 4.8 V5.8" fill="none" stroke="#fff" stroke-width="0.7"/></svg>
<!-- mic button -->
<div class="a" style="left:334px;top:376px;width:28px;height:28px;border-radius:50%;background:#d93025"></div>
<svg class="a" style="left:341px;top:383px" width="14" height="14" viewBox="0 0 14 14"><g fill="none" stroke="#fff" stroke-width="1.1"><rect x="5.3" y="2" width="3.4" height="6" rx="1.7" fill="#fff"/><path d="M3.5 6.5 A3.5 3.5 0 0 0 10.5 6.5 M7 10 V12"/><path d="M2.5 1.8 L11.5 12.2" stroke="#d93025" stroke-width="2.2"/><path d="M2.5 1.8 L11.5 12.2"/></g></svg>
<!-- end call -->
<div class="a" style="left:370px;top:376px;width:28px;height:28px;border-radius:50%;border:1px solid #eceff1"></div>
<svg class="a" style="left:377px;top:386px" width="14" height="8" viewBox="0 0 14 8"><path d="M1 5 C4 1 10 1 13 5 L11.5 6.5 L9.5 4.8 V3.5 C8 3 6 3 4.5 3.5 V4.8 L2.5 6.5Z" fill="#d93025"/></svg>
<!-- camera -->
<div class="a" style="left:406px;top:376px;width:28px;height:28px;border-radius:50%;border:1px solid #eceff1"></div>
<svg class="a" style="left:413px;top:385px" width="14" height="10" viewBox="0 0 14 10"><rect x="1" y="1.5" width="8" height="7" fill="none" stroke="#5f6368" stroke-width="1.2"/><path d="M9 4 L12.5 2 V8 L9 6Z" fill="#5f6368"/></svg>
<!-- raise hand -->
<svg class="a" style="left:618px;top:376px" width="12" height="13" viewBox="0 0 12 13"><path d="M3 7 V3 A0.9 0.9 0 0 1 4.8 3 V6 V2 A0.9 0.9 0 0 1 6.6 2 V6 V2.5 A0.9 0.9 0 0 1 8.4 2.5 V6 V4 A0.9 0.9 0 0 1 10.2 4 V8.5 C10.2 11 8.5 12.3 6.5 12.3 C4.5 12.3 3.5 11 2.5 9.5 L1 7.2 A0.9 0.9 0 0 1 2.5 6.2Z" fill="none" stroke="#5f6368" stroke-width="1"/></svg>
<div class="t" style="left:603px;top:393px;font-size:7.05px;color:#3c4043">Підняти руку</div>
<svg class="a" style="left:692px;top:375px" width="12" height="10" viewBox="0 0 12 10"><rect x="0.6" y="0.6" width="10.8" height="8.3" fill="none" stroke="#3c4043" stroke-width="1.1"/><path d="M6 7 V3.2 M4.3 4.8 L6 3 L7.7 4.8" fill="none" stroke="#3c4043" stroke-width="1.1"/></svg>
<div class="t" style="left:670.5px;top:388px;font-size:6.9px;color:#3c4043">Андрій Петранюк</div>
<div class="t" style="left:660px;top:397px;font-size:6.9px;color:#3c4043">проводить презентацію</div>
<div class="a" style="left:752px;top:385.5px;width:2px;height:2px;background:#3c4043;border-radius:50%;box-shadow:0 3.5px 0 #3c4043,0 7px 0 #3c4043"></div>
<!-- TASKBAR -->
<div class="a" style="left:0;top:412px;width:768px;height:20px;background:#202022"></div>
<svg class="a" style="left:8px;top:418px" width="9" height="9" viewBox="0 0 9 9"><g fill="#fff"><rect x="0" y="0.5" width="4" height="3.7"/><rect x="4.6" y="0" width="4.4" height="4.2"/><rect x="0" y="4.8" width="4" height="3.7"/><rect x="4.6" y="4.8" width="4.4" height="4.2"/></g></svg>
<div class="a" style="left:24px;top:412px;width:172px;height:20px;background:#f0f0f0;border-top:1px solid #d0d0d0"></div>
<svg class="a" style="left:31px;top:416px" width="10" height="11" viewBox="0 0 10 11"><circle cx="6" cy="4" r="3" fill="none" stroke="#333" stroke-width="1"/><path d="M3.8 6.3 L1 9.5" stroke="#333" stroke-width="1.2"/></svg>
<div class="t" style="left:46.5px;top:418.5px;font-size:7.4px;color:#333">Введіть пошуковий запит тут</div>
<div class="a" style="left:204px;top:418px;width:8px;height:8px;border:1.2px solid #fff;border-radius:50%"></div>
<svg class="a" style="left:227px;top:417px" width="10" height="10" viewBox="0 0 10 10"><g fill="none" stroke="#fff" stroke-width="1"><rect x="2.5" y="2.5" width="5" height="5"/><path d="M1 1 V9 M9 1 V9"/></g></svg>
<!-- taskbar apps -->
<svg class="a" style="left:251px;top:415px" width="13" height="13" viewBox="0 0 13 13"><path d="M4 3 A2.5 2.5 0 0 1 9 3" fill="none" stroke="#f0e8c0" stroke-width="1"/><rect x="1" y="3.5" width="11" height="9" fill="#f6f0d8"/><rect x="4" y="6" width="2" height="2" fill="#f25022"/><rect x="6.5" y="6" width="2" height="2" fill="#7fba00"/><rect x="4" y="8.5" width="2" height="2" fill="#00a4ef"/><rect x="6.5" y="8.5" width="2" height="2" fill="#ffb900"/></svg>
<svg class="a" style="left:276px;top:416px" width="12" height="11" viewBox="0 0 12 11"><g fill="#fff"><path d="M3 0.5 L6 2.5 L3 4.5 L0 2.5Z"/><path d="M9 0.5 L12 2.5 L9 4.5 L6 2.5Z"/><path d="M3 4.5 L6 6.5 L3 8.5 L0 6.5Z"/><path d="M9 4.5 L12 6.5 L9 8.5 L6 6.5Z"/><path d="M6 7.5 L8.5 9 L6 10.5 L3.5 9Z"/></g></svg>
<svg class="a" style="left:302px;top:415px" width="8" height="13" viewBox="0 0 8 13"><path d="M2 0.5 L6 5 L3 7 L6 12.5" fill="none" stroke="#2aa8e0" stroke-width="1.6"/></svg>
<svg class="a" style="left:323px;top:417px" width="14" height="10" viewBox="0 0 14 10"><rect width="14" height="10" fill="#1f8ad8"/><path d="M0 0 L7 5.5 L14 0" fill="none" stroke="#e8f4fc" stroke-width="1.2"/></svg>
<div class="a" style="left:347.5px;top:415.5px;width:13px;height:13px;border-radius:50%;background:#1d8cf5"></div>
<svg class="a" style="left:350px;top:419px" width="8" height="6" viewBox="0 0 8 6"><path d="M0.5 4.5 L3 1.5 L5 3.2 L7.5 1" fill="none" stroke="#fff" stroke-width="1.1"/></svg>
<div class="a" style="left:372px;top:415px;width:13px;height:13px;background:#3b5998"></div>
<div class="t" style="left:377px;top:416.5px;font-size:12px;color:#fff;font-weight:bold">f</div>
<svg class="a" style="left:396px;top:417px" width="13" height="10" viewBox="0 0 13 10"><rect width="13" height="10" fill="#e8e4e4"/><path d="M0 0.5 L6.5 5.5 L13 0.5 V10 H10.5 V4 L6.5 7 L2.5 4 V10 H0Z" fill="#d44638"/></svg>
<div class="a" style="left:420px;top:416px;width:13px;height:13px;border-radius:50%;background:conic-gradient(#0c59a4 0 25%,#1ea0e0 25% 55%,#5ec84e 55% 80%,#0c59a4 80%)"></div>
<div class="a" style="left:421px;top:422px;width:6px;height:6px;border-radius:50%;background:#eee"></div>
<div class="a" style="left:444px;top:415.5px;width:13px;height:13px;border-radius:4px;background:#2d8cff"></div>
<div class="a" style="left:447px;top:420px;width:5px;height:4px;background:#fff;border-radius:1px"></div>
<div class="a" style="left:452.5px;top:420.5px;width:2px;height:3px;background:#fff"></div>
<svg class="a" style="left:468px;top:416px" width="14" height="12" viewBox="0 0 14 12"><path d="M0 1 H5 L6 2.5 H14 V12 H0Z" fill="#e8b830"/><rect x="0" y="4" width="14" height="8" fill="#f8d048"/><rect x="2" y="6" width="10" height="3" fill="#4a90c8"/></svg>
<svg class="a" style="left:493px;top:416px" width="13" height="12" viewBox="0 0 13 12"><rect x="3" y="0" width="10" height="12" fill="#41a5ee"/><rect x="3" y="6" width="10" height="6" fill="#185abd"/><rect x="0" y="2.5" width="8" height="7.5" fill="#185abd"/><text x="1" y="9" font-size="6.5" fill="#fff" font-family="Liberation Sans" font-weight="bold">W</text></svg>
<div class="a" style="left:512px;top:412px;width:23px;height:20px;background:#3a3a3c"></div>
<div class="a" style="left:517px;top:416px;width:13px;height:13px;border-radius:50%;background:conic-gradient(from -30deg,#db4437 0 33%,#0f9d58 33% 66%,#f4c20d 66%)"></div>
<div class="a" style="left:520px;top:419px;width:7px;height:7px;border-radius:50%;background:#4285f4;border:1.2px solid #fff"></div>
<div class="a" style="left:541px;top:415px;width:13px;height:13px;border-radius:50%;background:#7b519d"></div>
<div class="a" style="left:548px;top:421px;width:8px;height:8px;border-radius:50%;background:#e04040"></div>
<div class="t" style="left:563.5px;top:413px;font-size:5.5px;color:#ddd">UK</div>
<div class="a" style="left:412px;top:430.5px;width:24px;height:1.5px;background:#7aa8d8"></div>
<div class="a" style="left:462px;top:430.5px;width:24px;height:1.5px;background:#7aa8d8"></div>
<div class="a" style="left:488px;top:430.5px;width:22px;height:1.5px;background:#7aa8d8"></div>
<div class="a" style="left:513px;top:430.5px;width:22px;height:1.5px;background:#7aa8d8"></div>
<div class="a" style="left:537px;top:430.5px;width:22px;height:1.5px;background:#7aa8d8"></div>
<!-- tray -->
<div class="a" style="left:576.5px;top:416.5px;width:11px;height:11px;border-radius:50%;background:#3a8ee6"></div>
<div class="t" style="left:579.5px;top:418px;font-size:8px;color:#fff;font-weight:bold">?</div>
<svg class="a" style="left:593px;top:419px" width="8" height="5" viewBox="0 0 8 5"><path d="M0.7 4.3 L4 1 L7.3 4.3" fill="none" stroke="#ddd" stroke-width="0.9"/></svg>
<svg class="a" style="left:607px;top:416px" width="10" height="11" viewBox="0 0 10 11"><g fill="none" stroke="#ddd" stroke-width="0.9"><rect x="2" y="3" width="6" height="5"/><path d="M1 10 H9 M5 1 V3"/></g></svg>
<svg class="a" style="left:622px;top:417px" width="12" height="9" viewBox="0 0 12 9"><path d="M0.5 8.5 V3 L3 1 L6 4 L8 2.5 L11.5 6 V8.5Z" fill="none" stroke="#ddd" stroke-width="0.9"/><path d="M2 4 L10 8" stroke="#ddd" stroke-width="0.9"/></svg>
<svg class="a" style="left:638px;top:417px" width="12" height="9" viewBox="0 0 12 9"><path d="M2 8 C0 8 0 5 2 5 C2 2 6 1 7 4 C9 3 11 5 10 8Z" fill="#ddd"/></svg>
<svg class="a" style="left:654px;top:417px" width="11" height="10" viewBox="0 0 11 10"><path d="M1 3.5 H3 L6 1 V9 L3 6.5 H1Z" fill="none" stroke="#bbb" stroke-width="0.9"/><path d="M8 3 Q9.5 5 8 7" fill="none" stroke="#888" stroke-width="0.8"/></svg>
<svg class="a" style="left:671px;top:416px" width="12" height="12" viewBox="0 0 12 12"><g fill="none" stroke="#ddd" stroke-width="1"><path d="M2 10 L5 7 M4 5.5 L6.5 8 M7 4 L10 1"/><rect x="4.5" y="3.2" width="3.5" height="5" transform="rotate(45 6.2 5.7)"/></g></svg>
<div class="t" style="left:691.5px;top:419px;font-size:6.3px;color:#ddd">УКР</div>
<div class="t" style="left:717px;top:414.5px;font-size:6px;color:#ddd">16:17</div>
<div class="t" style="left:709.5px;top:423.5px;font-size:6px;color:#ddd">23.03.2021</div>
<div class="a" style="left:764px;top:412px;width:1px;height:20px;background:#555"></div>
<svg class="a" style="left:745px;top:415px" width="14" height="14" viewBox="0 0 14 14"><path d="M1 1 H11 V9 H5 L2 11.5 V9 H1Z" fill="#ddd"/><path d="M3 3.5 H9 M3 5.5 H9" stroke="#202022" stroke-width="0.7"/><circle cx="9.5" cy="10" r="3.5" fill="#202022" stroke="#ddd" stroke-width="0.8"/><text x="8" y="12" font-size="5" fill="#fff" font-family="Liberation Sans">2</text></svg>

</body></html>
